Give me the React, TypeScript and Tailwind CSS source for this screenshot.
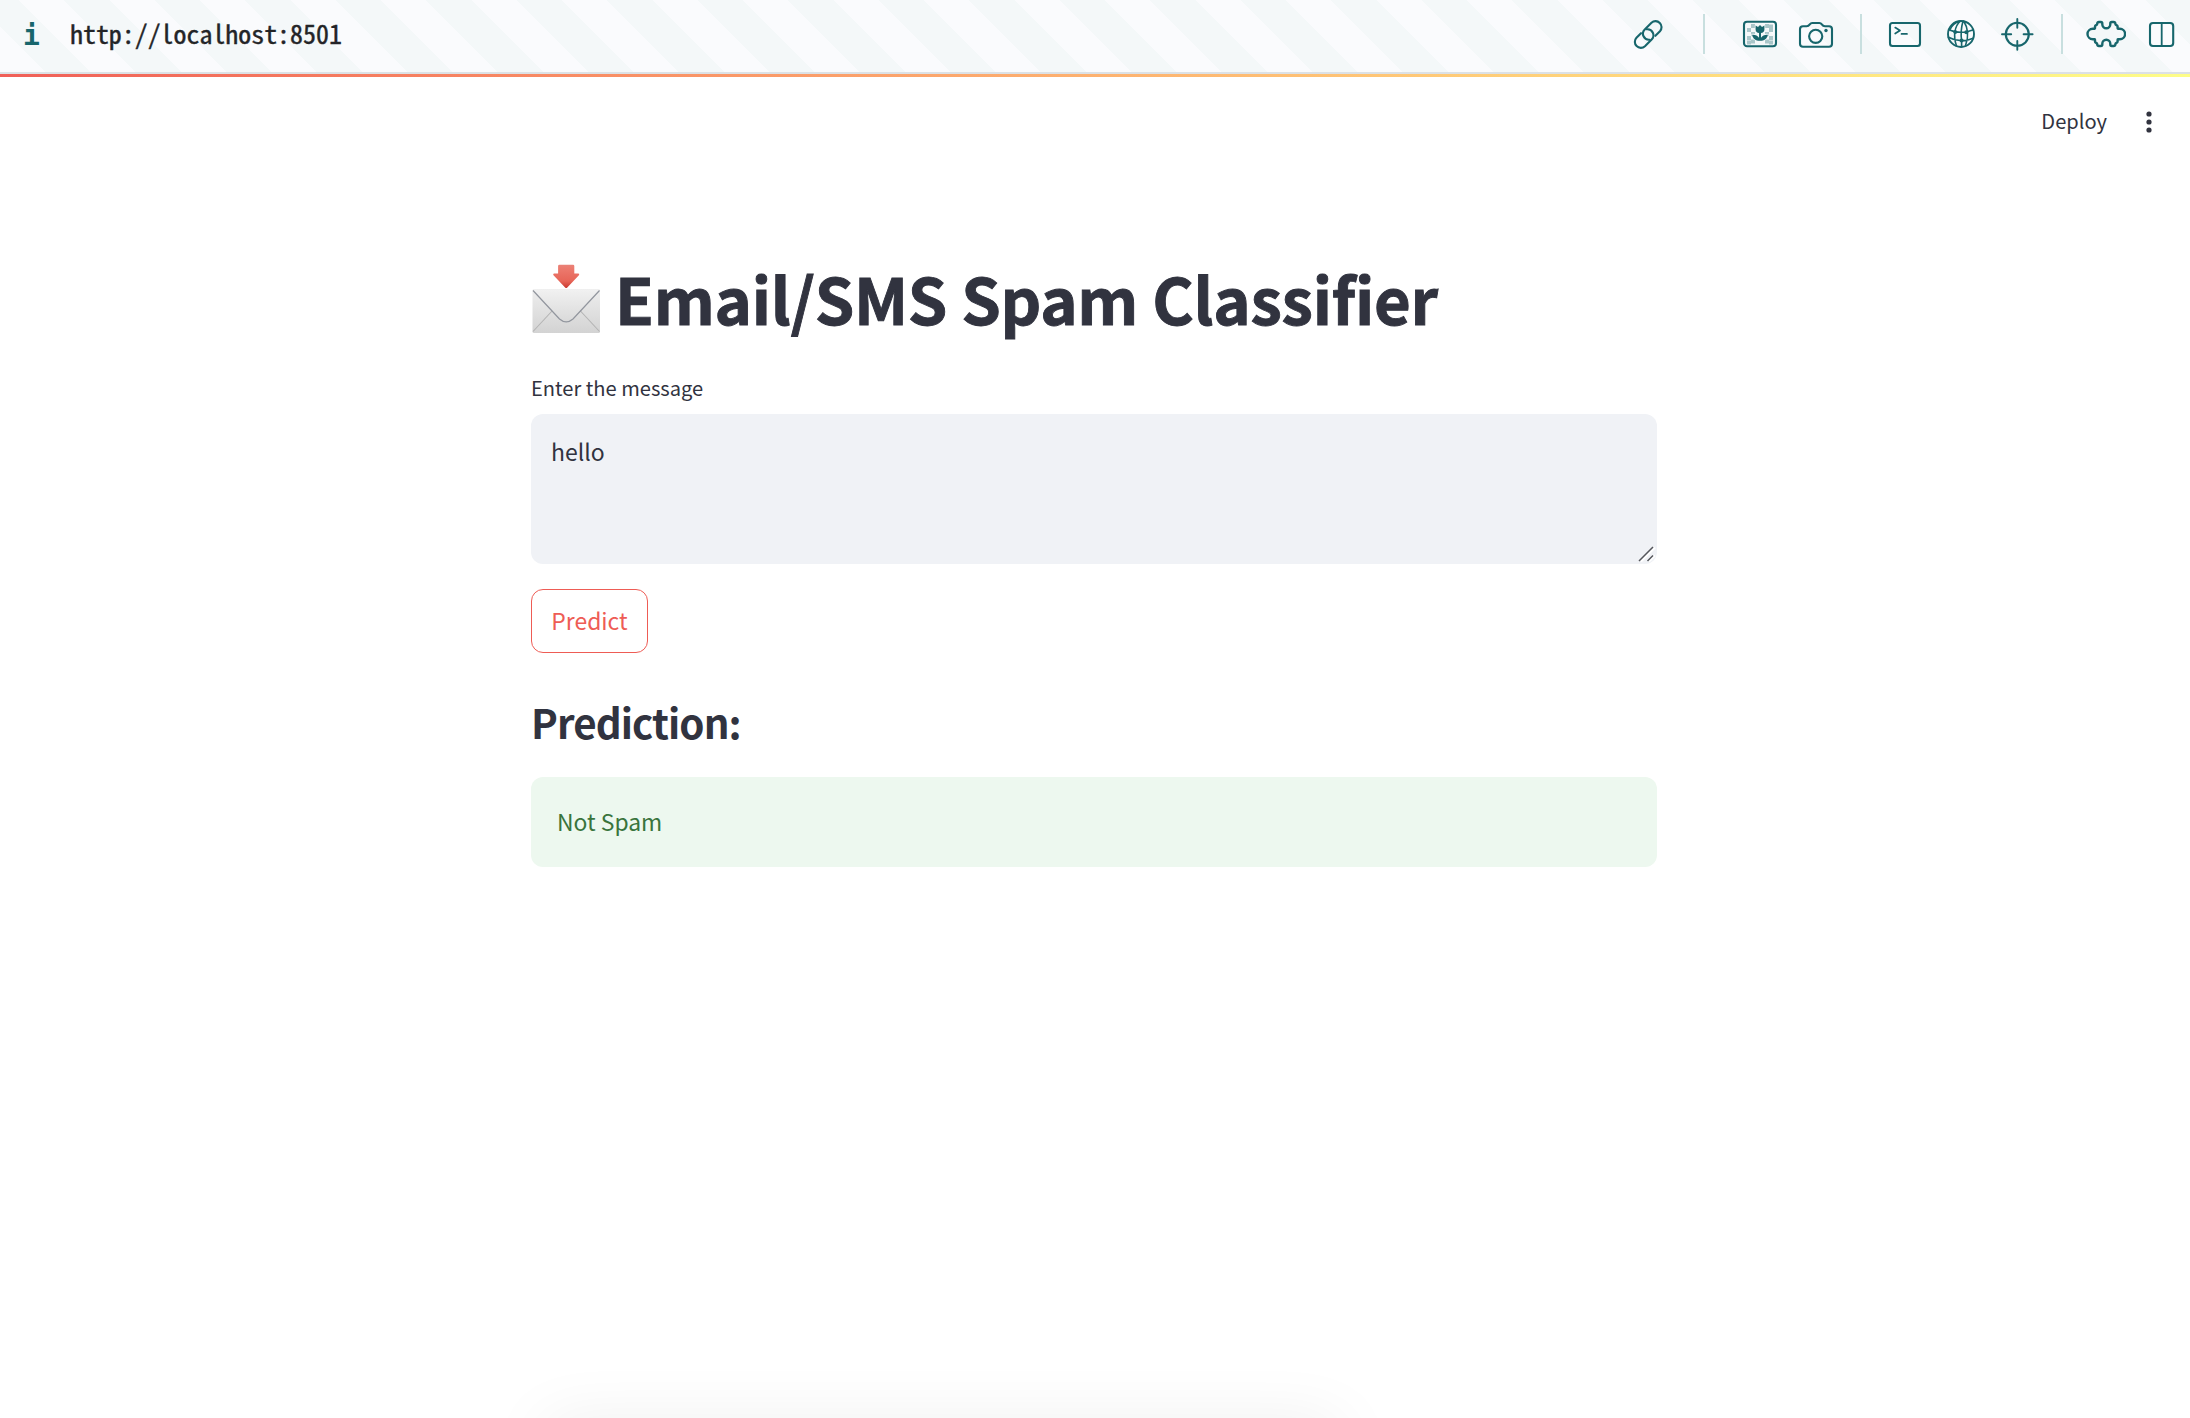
import type { ReactNode } from "react";

function Icon({ children }: { children: ReactNode }) {
  return (
    <svg
      viewBox="0 0 40 40"
      className="size-10 shrink-0 text-[#17666c]"
      fill="none"
      stroke="currentColor"
      strokeWidth="2.1"
      strokeLinecap="round"
      strokeLinejoin="round"
    >
      {children}
    </svg>
  );
}

function Divider() {
  return <div className="h-10 w-0.5 shrink-0 bg-[#c8dfdf]" />;
}

const linkPath =
  "M27.4 21.8 L31.94 17.24 A6 6 0 0 0 23.46 8.76 L16.76 15.46 A6 6 0 0 0 21.5 25.7";

const checks = [
  [11, 10], [7, 14], [11, 18], [7, 22], [11, 25.5],
  [25, 10], [29, 14], [25, 18], [29, 22], [25, 25.5],
  [7, 26.5], [29, 26.5], [29, 10.5], [15, 14],
];

function Toolbar() {
  return (
    <header className="flex h-[74px] items-start justify-between border-b-2 border-[#dce1e5] bg-[repeating-linear-gradient(45deg,#fafbfd_0px,#fafbfd_32px,#f4f8f9_32px,#f4f8f9_64px)] pt-3.5 pr-2">
      <div className="-mt-px flex h-10 items-center">
        <span className="mt-1.5 ml-[23px] w-[47px] font-['DejaVu_Sans_Mono',monospace] text-[28px] leading-10 font-bold text-[#17666c]">
          i
        </span>
        <span className="font-['Noto_Sans_Mono_CJK_SC','DejaVu_Sans_Mono',monospace] text-[25.900px] leading-10 text-[#232427] [-webkit-text-stroke:0.4px_#232427]">
          http://localhost:8501
        </span>
      </div>
      <div className="flex items-center">
        <Icon>
          <path d={linkPath} />
          <path d={linkPath} transform="rotate(180 20.2 20.5)" />
        </Icon>
        <div className="w-[35px]" />
        <Divider />
        <div className="w-[35px]" />
        <div className="flex gap-4">
          <Icon>
            <g fill="#a9c6c9" stroke="none">
              {checks.map(([x, y]) => (
                <rect key={`${x}-${y}`} x={x} y={y} width="4" height="4" />
              ))}
            </g>
            <rect x="4" y="7.8" width="32" height="24.4" rx="3" />
            <path
              d="M15.600 11.400l2.400 1.500L20 11l2 1.900 2.400-1.500v4c0 2.200-1.600 3.500-3.400 3.700v4.600c1.400-2.200 3.900-3.300 6.900-3-.7 3.900-3.500 6.100-7.900 6.100s-7.200-2.200-7.900-6.100c3-.3 5.500.8 6.900 3v-4.600c-1.800-.2-3.400-1.500-3.400-3.700z"
              fill="currentColor"
              stroke="#f4f8f9"
              strokeWidth="1.600"
              paintOrder="stroke"
            />
          </Icon>
          <Icon>
            <path d="M7 12.200h3.600c1.700 0 2.500-.8 3.200-1.800.7-1 1.200-1.400 2.400-1.400h7.200c1.200 0 1.700.4 2.400 1.400.7 1 1.500 1.800 3.200 1.800h4c2 0 3 1 3 3v14.600c0 2-1 3-3 3H7c-2 0-3-1-3-3V15.200c0-2 1-3 3-3z" />
            <circle cx="19.700" cy="22.300" r="6.600" />
            <circle cx="30" cy="16.500" r="1.700" fill="currentColor" stroke="none" />
          </Icon>
        </div>
        <div className="w-6" />
        <Divider />
        <div className="w-[23px]" />
        <div className="flex gap-4">
          <Icon>
            <rect x="5" y="9" width="30" height="23" rx="2.500" />
            <path d="M10.200 13.600l4.800 2.900-4.800 3M16.500 19.900h5.500" strokeWidth="1.700" />
          </Icon>
          <Icon>
            <circle cx="20" cy="20" r="13" strokeWidth="1.900" />
            <path
              d="M19.500 7c-6 5-7.500 15-4 25M22 7c-2.200 8-2.500 12-1.400 19.500V33M18.500 7.200c-4.500 1.500-8 5-9.500 8.300M22.800 7.200c4.200 6.500 5 15.300 1.700 24.300M8 15.800c6.500 3.400 16.500 3.200 23.800.2M7.400 23.300c7.600 4.200 17.500 4.300 24.800 1"
              strokeWidth="1.600"
            />
            <g fill="currentColor" stroke="none">
              <circle cx="14.200" cy="18" r="2" />
              <circle cx="25.300" cy="18.300" r="2" />
              <circle cx="20.600" cy="26.400" r="2" />
            </g>
          </Icon>
          <Icon>
            <circle cx="20.300" cy="20.300" r="11.500" />
            <path d="M5 20.300h9.200M26.600 20.300h9M20.300 5v8.700M20.300 26.900v8.900" strokeWidth="1.900" />
          </Icon>
        </div>
        <div className="w-6" />
        <Divider />
        <div className="w-[23px]" />
        <div className="flex gap-4">
          <Icon>
            <path
              strokeWidth="2.400"
              d="M12.600 8H14.600C15.600 8 16 8.500 16 9.500V10.200A4 4 0 0 0 24 10.200V9.500C24 8.500 24.400 8 25.400 8H27.400C28.600 8 29 8.600 29.200 10.200C29.400 11.300 31.300 11 31.300 12.500V14.200C31.300 15 32.500 14.700 33.500 14.700A5.300 5.300 0 0 1 33.500 25.300C32.500 25.300 31.300 25 31.300 25.800V27.500C31.300 29 29.400 28.700 29.200 29.800C29 31.400 28.600 32 27.400 32H25.400C24.400 32 24 31.500 24 30.500V29.800A4 4 0 0 0 16 29.800V30.500C16 31.500 15.600 32 14.600 32H12.600C11.400 32 11 31.400 10.800 29.800C10.600 28.700 8.700 29 8.700 27.500V25.800C8.700 25 7.500 25.300 6.500 25.300A5.300 5.300 0 0 1 6.500 14.700C7.500 14.700 8.700 15 8.700 14.200V12.500C8.700 11 10.600 11.300 10.800 10.200C11 8.600 11.400 8 12.600 8Z"
              transform="translate(0.300 0)"
            />
          </Icon>
          <Icon>
            <rect x="8" y="9" width="23.200" height="23" rx="3" />
            <path d="M19.700 9v23" strokeWidth="1.800" />
          </Icon>
        </div>
      </div>
    </header>
  );
}

function InboxEnvelope() {
  return (
    <svg viewBox="0 0 69 70" className="-mt-0.5 ml-px h-[70px] w-[69px] shrink-0">
      <defs>
        <linearGradient id="paper" x1="0" y1="0" x2="0" y2="1">
          <stop offset="0" stopColor="#eeeeee" />
          <stop offset="1" stopColor="#d3d3d3" />
        </linearGradient>
        <linearGradient id="flap" x1="0" y1="0" x2="0" y2="1">
          <stop offset="0" stopColor="#f1f1f1" />
          <stop offset="1" stopColor="#dadada" />
        </linearGradient>
        <linearGradient id="arrow" x1="0" y1="0" x2="0" y2="1">
          <stop offset="0" stopColor="#e98278" />
          <stop offset="0.150" stopColor="#ec7a6e" />
          <stop offset="0.700" stopColor="#e76558" />
          <stop offset="1" stopColor="#c9382e" />
        </linearGradient>
      </defs>
      <rect x="0.500" y="25" width="67.500" height="44" rx="1.500" fill="url(#paper)" />
      <path d="M1 67.500L20.500 46.500M67.500 67.500L48 46.500" stroke="#b4b4b4" strokeWidth="1.100" />
      <path d="M1 25.500L27.500 54.500Q34.200 60.500 41 54.500L67.500 25.500Z" fill="url(#flap)" />
      <path d="M1 26.500L27.500 55Q34.200 60.800 41 55L67.500 26.500" fill="none" stroke="#92969e" strokeWidth="1.200" />
      <path
        d="M27.500 .8h13.500q1.300 0 1.300 1.300v7.400h4q1.700.2.600 1.800L35.300 23.500q-1.100 1-2.200 0L21.500 11.300q-1-1.600.6-1.800h4V2.100q0-1.300 1.400-1.300z"
        fill="url(#arrow)"
      />
    </svg>
  );
}

export default function App() {
  return (
    <div className="relative flex h-[1418px] w-[2190px] flex-col overflow-hidden bg-white font-['Noto_Sans_CJK_SC',sans-serif] text-[#31333f]">
      <Toolbar />
      <div className="h-[3px] shrink-0 bg-linear-to-r from-[#f05f58] to-[#fdfd88]" />

      <div className="flex h-[90px] items-center justify-end pr-[38px]">
        <span className="-mt-0.5 text-[20.100px] leading-[30px]">Deploy</span>
        <svg viewBox="0 0 6 24" className="ml-[39px] h-6 w-1.5" fill="currentColor">
          <circle cx="3" cy="4" r="2.600" />
          <circle cx="3" cy="12" r="2.600" />
          <circle cx="3" cy="20" r="2.600" />
        </svg>
      </div>

      <main className="ml-[531px] flex w-[1126px] flex-col">
        <h1 className="mt-[88px] flex h-[90px] items-center text-[63.400px] leading-[90px] font-bold">
          <InboxEnvelope />
          <span className="-mt-[7px] ml-3.5 tracking-[-0.270px] whitespace-nowrap [-webkit-text-stroke:0.9px_#31333f]">
            Email/SMS Spam Classifier
          </span>
        </h1>
        <label className="mt-[27px] block text-[20.100px] leading-[32px]">Enter the message</label>
        <div className="relative mt-[10px] h-[150px] rounded-xl bg-[#f0f2f6] px-5 pt-[19px] text-[23px] leading-9">
          hello
          <svg viewBox="0 0 18 18" className="absolute right-px bottom-px size-[18px]" fill="none">
            <path d="M3 16.500L17 2.500M11 16.500L17 10.500" stroke="#ffffff" strokeWidth="2" />
            <path d="M1 16L15 2M9.500 16L15 10.500" stroke="#55575c" strokeWidth="1.500" />
          </svg>
        </div>
        <button className="mt-[25px] h-16 w-[117px] rounded-xl border border-[#ee5c55] pb-0.5 text-[22.900px] leading-9 text-[#ee5c55]">
          Predict
        </button>
        <h2 className="mt-[39px] text-[40.300px] leading-[60px] font-bold tracking-[-0.900px]">Prediction:</h2>
        <div className="mt-[25px] flex h-[90px] items-center rounded-xl bg-[#edf8ef] px-[26px] pb-0.5 text-[22.900px] leading-9 text-[#39743c]">
          Not Spam
        </div>
      </main>

      <div className="absolute top-[1428px] left-[550px] h-10 w-[785px] shadow-[0_0_66px_4px_rgba(0,0,0,0.080)]" />
    </div>
  );
}
